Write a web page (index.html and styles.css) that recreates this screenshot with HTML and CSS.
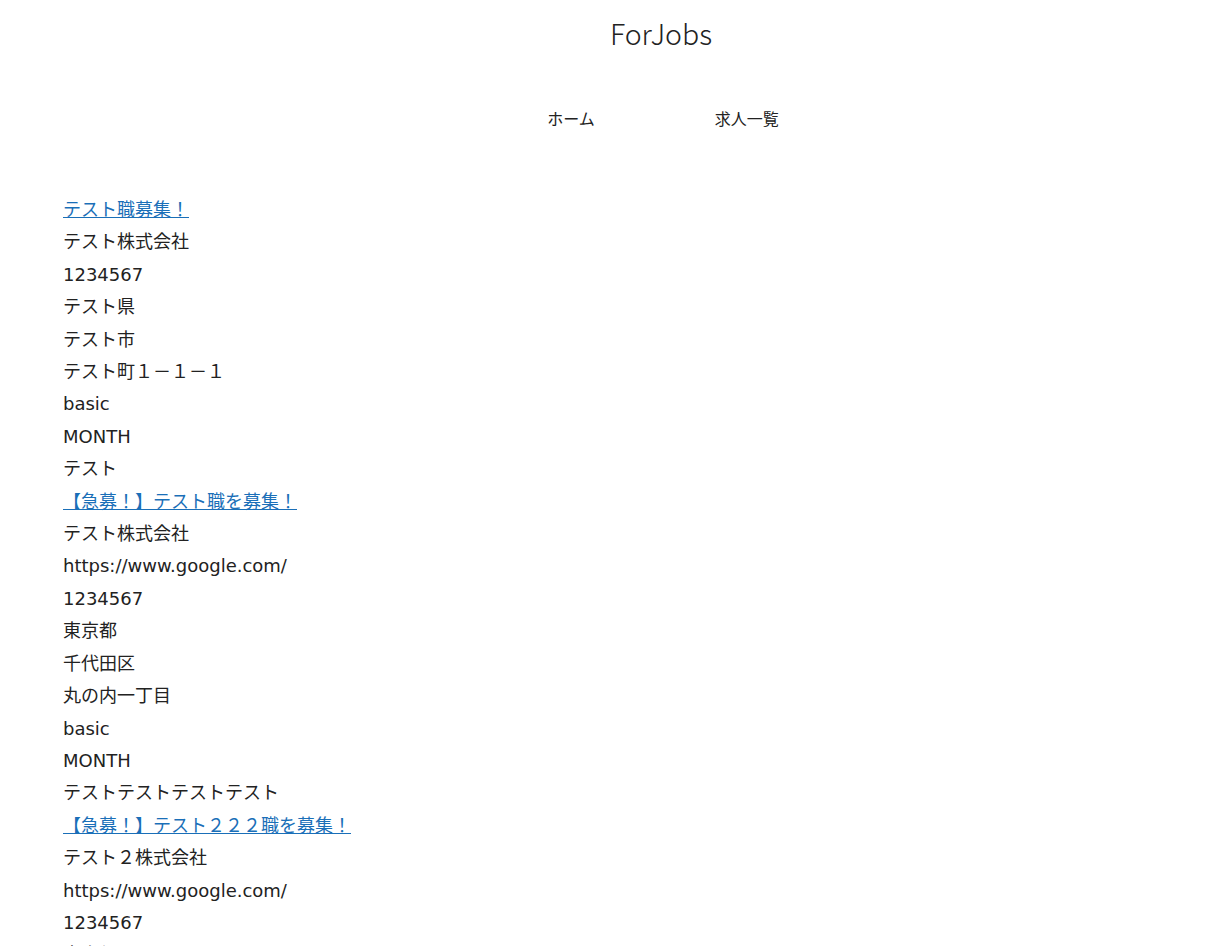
FILE: index.html
```html
<!DOCTYPE html>
<html lang="ja">
<head>
    <meta charset="UTF-8">
    <meta name="viewport" content="width=device-width, initial-scale=1.0">
    <title>ForJobs</title>
    <link rel="stylesheet" href="styles.css">
</head>
<body>
    <header class="site-header">
        <h1 class="logo">ForJobs</h1>
        <nav>
            <ul class="nav-list">
                <li><a href="#">ホーム</a></li>
                <li><a href="#">求人一覧</a></li>
            </ul>
        </nav>
    </header>

    <main class="job-list">
        <div class="job">
            <a class="job-title" href="#">テスト職募集！</a>
            <div>テスト株式会社</div>
            <div>1234567</div>
            <div>テスト県</div>
            <div>テスト市</div>
            <div>テスト町１－１－１</div>
            <div>basic</div>
            <div>MONTH</div>
            <div>テスト</div>
        </div>

        <div class="job">
            <a class="job-title" href="#">【急募！】テスト職を募集！</a>
            <div>テスト株式会社</div>
            <div>https://www.google.com/</div>
            <div>1234567</div>
            <div>東京都</div>
            <div>千代田区</div>
            <div>丸の内一丁目</div>
            <div>basic</div>
            <div>MONTH</div>
            <div>テストテストテストテスト</div>
        </div>

        <div class="job">
            <a class="job-title" href="#">【急募！】テスト２２２職を募集！</a>
            <div>テスト２株式会社</div>
            <div>https://www.google.com/</div>
            <div>1234567</div>
            <div>東京都</div>
            <div>千代田区</div>
            <div>丸の内一丁目</div>
            <div>basic</div>
            <div>MONTH</div>
            <div>テストテストテスト</div>
        </div>
    </main>
</body>
</html>
```

FILE: styles.css
```css
body {
    margin: 0;
    background: #fff;
    color: #222;
    font-family: "DejaVu Sans", "Noto Sans CJK JP", sans-serif;
}

.site-header {
    padding-left: 119px;
    text-align: center;
}

.logo {
    margin: 0 0 0 -4px;
    padding-top: 13px;
    font-family: "Noto Sans CJK JP", sans-serif;
    font-size: 28.5px;
    font-weight: 300;
    line-height: 40px;
}

.nav-list {
    display: flex;
    justify-content: center;
    list-style: none;
    margin: 53px 0 0;
    padding: 0;
}

.nav-list li {
    padding: 0 60px;
}

.nav-list a {
    color: #222;
    text-decoration: none;
    font-family: "Noto Sans CJK JP", sans-serif;
    font-size: 16px;
    line-height: 24px;
}

.job-list {
    padding: 64px 63px 0;
}

.job {
    font-size: 18px;
    line-height: 32.4px;
}

.job-title {
    display: block;
    color: #1a6fb8;
}
```
